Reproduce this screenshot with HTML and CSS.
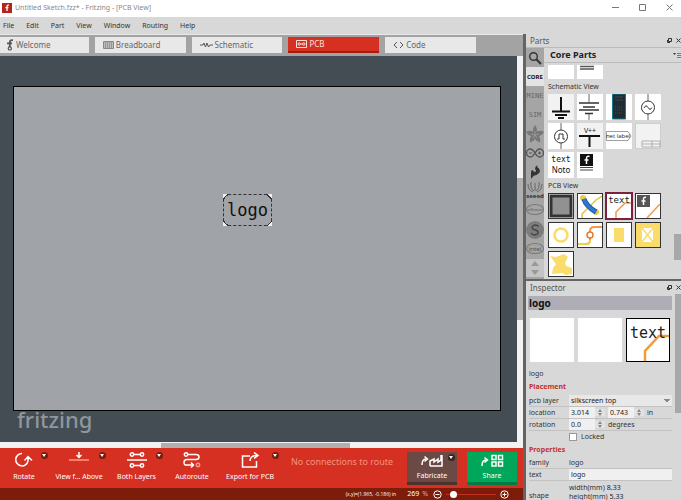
FILE: index.html
```html
<!DOCTYPE html>
<html lang="en">
<head>
    <meta charset="UTF-8">
    <meta name="viewport" content="width=device-width, initial-scale=1.0">
    <title>Untitled Sketch.fzz* - Fritzing - [PCB View]</title>
    <link rel="stylesheet" href="styles.css">
</head>
<body>

    <header class="titlebar">
        <svg class="app-icon" viewBox="0 0 10 10"><rect width="10" height="10" fill="#b5241c"/><path d="M7 2.2H6q-1 0-1 1V8M3.4 4.6h3" stroke="#fff" stroke-width="1.3" fill="none"/></svg>
        <span class="title">Untitled Sketch.fzz* - Fritzing - [PCB View]</span>
        <div class="window-buttons">
            <button aria-label="Minimize"><svg viewBox="0 0 7 7"><path d="M0 3.5h7"/></svg></button>
            <button aria-label="Maximize"><svg viewBox="0 0 7 7"><path d="M.5.5h6v6h-6z"/></svg></button>
            <button aria-label="Close"><svg viewBox="0 0 7 7"><path d="M.5.5l6 6M6.5.5l-6 6"/></svg></button>
        </div>
    </header>

    <nav class="menubar">
        <a href="#">File</a>
        <a href="#">Edit</a>
        <a href="#">Part</a>
        <a href="#">View</a>
        <a href="#">Window</a>
        <a href="#">Routing</a>
        <a href="#">Help</a>
    </nav>

    <main class="main">

        <section class="editor">
            <div class="tabs">
                <button class="tab tab-first"><svg width="8" height="12" viewBox="0 0 8 12"><path d="M7 1.2Q3.8.6 3.8 3.6V8M1 4.4h5" stroke-width="1.8"/><circle cx="3.8" cy="9.4" r="1.6" stroke-width="1.2"/></svg>Welcome</button>
                <button class="tab"><svg width="11" height="8" viewBox="0 0 11 8"><path d="M.5.5h10v7H.5z" fill="#bbb" stroke="#888"/><path d="M2 2h8M2 4h8M2 6h8" stroke="#777" stroke-dasharray="1 1"/></svg>Breadboard</button>
                <button class="tab"><svg width="13" height="8" viewBox="0 0 13 8"><path d="M0 4h3l1-2 1.5 4L7 2l1.5 4L10 4h3"/></svg>Schematic</button>
                <button class="tab tab-active"><svg width="11" height="8" viewBox="0 0 11 8"><path d="M.5.5h10v7H.5zM4.5 4h2"/><circle cx="3.2" cy="4" r="1.2"/><circle cx="7.8" cy="4" r="1.2"/></svg>PCB</button>
                <button class="tab"><svg width="11" height="8" viewBox="0 0 11 8"><path d="M4 1L1 4l3 3M7 1l3 3-3 3"/></svg>Code</button>
            </div>

            <div class="canvas-row">
                <div class="workspace">
                    <div class="board">
                        <div class="silk-text">
                            <span>logo</span>
                            <i class="corner top left"></i>
                            <i class="corner top right"></i>
                            <i class="corner bottom left"></i>
                            <i class="corner bottom right"></i>
                        </div>
                    </div>
                    <div class="watermark">fritzing</div>
                </div>
                <div class="scroll-v"><div class="thumb"></div></div>
            </div>
            <div class="scroll-h"><div class="thumb"></div></div>

            <div class="toolbar">
                <button class="tool tool-rotate">
                    <svg width="20" height="16" viewBox="0 0 20 16"><path d="M8 1.5A6.2 6.2 0 1 0 14 9V5M10.5 8.5L14 4.5l4 4"/></svg>
                    Rotate
                    <i class="drop"></i>
                </button>
                <button class="tool tool-view">
                    <svg width="20" height="16" viewBox="0 0 20 16"><path d="M10 0v5M7.5 3L10 5.5 12.5 3"/><path d="M0 8h20" stroke="#ff9a80"/></svg>
                    View f... Above
                    <i class="drop"></i>
                </button>
                <button class="tool tool-layers">
                    <svg width="20" height="16" viewBox="0 0 20 16"><path d="M0 8h20M7 2.5h6M7 13.5h6"/><circle cx="5" cy="2.5" r="1.7"/><circle cx="15" cy="2.5" r="1.7"/><circle cx="5" cy="13.5" r="1.7"/><circle cx="15" cy="13.5" r="1.7"/></svg>
                    Both Layers
                    <i class="drop"></i>
                </button>
                <button class="tool tool-autoroute">
                    <svg width="20" height="16" viewBox="0 0 20 16"><circle cx="4" cy="2.5" r="1.7"/><path d="M6 2.5h8q3 0 3 2.500t-3 2.500H5q-3 0-3 3t3 2.500h6M9 10.500l2.500 2.500L9 15.500"/><circle cx="16" cy="13" r="1.7" stroke="#ff9a80"/></svg>
                    Autoroute
                </button>
                <button class="tool tool-export">
                    <svg width="20" height="16" viewBox="0 0 20 16"><path d="M10 4H2.5v11h14V9M10 9q0-5.500 7-5.500M14 .5l4 3-4 3"/></svg>
                    Export for PCB
                    <i class="drop"></i>
                </button>
                <span class="route-status">No connections to route</span>
                <button class="big-btn fabricate">
                    <svg width="24" height="14" viewBox="0 0 24 14"><path d="M2 11Q2 5 6 5M4.5 2.5L7.5 5l-3 2.500M10 12V7l4-2v3l4-3v3l3-2V1M22 1v11H10"/></svg>
                    Fabricate
                    <i class="drop"></i>
                </button>
                <button class="big-btn share">
                    <svg width="24" height="14" viewBox="0 0 24 14"><path d="M2 12Q2 6 6 6M4.5 3.5L7.5 6l-3 2.500M12 1.500h4v4h-4zM18.5 1.500h4v4h-4zM12 8h4v4h-4zM18.5 8h4v4h-4z"/></svg>
                    Share
                </button>
            </div>

            <footer class="statusbar">
                <span class="coords">(x,y)=(1.965, -0.186) in</span>
                <span class="zoom-value">269</span>
                <span class="percent">%</span>
                <button aria-label="Zoom out"><svg width="9" height="9" viewBox="0 0 9 9"><circle cx="4.5" cy="4.5" r="3.7"/><path d="M2.5 4.5h4"/></svg></button>
                <input type="range" class="zoom-slider" min="0" max="100" value="10" aria-label="Zoom">
                <button aria-label="Zoom in"><svg width="9" height="9" viewBox="0 0 9 9"><circle cx="4.5" cy="4.5" r="3.7"/><path d="M2.5 4.5h4M4.5 2.5v4"/></svg></button>
            </footer>
        </section>

        <aside class="docks">
            <section class="dock parts">
                <div class="dock-head">
                    <h2>Parts</h2>
                    <button aria-label="Float"><svg width="5" height="5" viewBox="0 0 5 5"><path d="M1.5.5h3v3h-3zM.5 2v2.500H3"/></svg></button>
                    <button aria-label="Close"><svg width="5" height="5" viewBox="0 0 5 5"><path d="M.5.5l4 4M4.5.5l-4 4"/></svg></button>
                </div>
                <div class="parts-body">
                    <div class="bins">
                        <button class="bin" aria-label="Search"><svg width="14" height="14" viewBox="0 0 14 14"><circle cx="5.5" cy="5.5" r="3.8" stroke-width="1.4"/><path d="M8.3 8.3L13 13" stroke-width="2"/></svg></button>
                        <button class="bin bin-active">CORE</button>
                        <button class="bin bin-mono">MINE</button>
                        <button class="bin bin-mono">SIM</button>
                        <button class="bin" aria-label="Adafruit"><svg width="18" height="18" viewBox="0 0 18 18"><path d="M9 0Q11.5 3 11 6.500 15 5 18 7q-2 3.500-5 4 2 3 1 6.500-3.500-1-5-3.500-1.500 2.500-5 3.500-1-3.500 1-6.500-3-.5-5-4Q3 5 7 6.500 6.500 3 9 0z" fill="#777" stroke="none"/><path d="M9 10V6M9 10l3.500-1M9 10l2 3M9 10l-2 3M9 10L5.500 9" stroke="#a5a5a5" stroke-width=".7"/></svg></button>
                        <button class="bin" aria-label="Arduino"><svg width="18" height="10" viewBox="0 0 18 10"><g stroke="#555"><path d="M9 5Q6.500 1 4.500 1a4 4 0 0 0 0 8Q6.500 9 9 5t4.500-4a4 4 0 0 1 0 8Q11.500 9 9 5z" stroke-width="1.4"/><path d="M3 5h3M12 5h3M13.500 3.500v3"/></g></svg></button>
                        <button class="bin" aria-label="Sparkfun"><svg width="12" height="14" viewBox="0 0 12 14"><path d="M2 14V7q0-2 2-2 0 2 2 2 2-1 0-3Q6 1 8.500 0 7.500 2 10 3.500q2 3-.5 5Q7 11 5 10.500z" fill="#333" stroke="none"/></svg></button>
                        <button class="bin bin-seeed"><svg width="16" height="11" viewBox="0 0 16 11"><path d="M1 2q0 6 5 8M15 2q0 6-5 8M4 0q-1 6 3 9M12 0q1 6-3 9M8 1v8" stroke="#666"/></svg>seeed</button>
                        <button class="bin bin-infineon">infineon</button>
                        <button class="bin" aria-label="Snootlab"><svg width="18" height="18" viewBox="0 0 20 20"><circle cx="10" cy="10" r="10" fill="#7c7c7c" stroke="none"/><path d="M14 6Q12 4 9.500 4.500 6 5.500 7 8q.5 1.500 3.500 2t3 3q-.5 2.500-3.500 2.500T5.500 13.500" stroke="#444" stroke-width="1.5"/></svg></button>
                        <button class="bin bin-intel">intel</button>
                        <button class="bin bin-arrow" aria-label="Up"><svg width="8" height="5" viewBox="0 0 8 5"><path d="M0 5l4-5 4 5z"/></svg></button>
                        <button class="bin bin-arrow" aria-label="Down"><svg width="8" height="5" viewBox="0 0 8 5"><path d="M0 0l4 5 4-5z"/></svg></button>
                    </div>
                    <div class="bin-view">
                        <div class="bin-title">
                            <h3>Core Parts</h3>
                            <button aria-label="Bin menu"><svg width="8" height="6" viewBox="0 0 8 6"><path d="M0 1h3L1.500 3z" fill="#333" stroke="none"/><path d="M4 1.500h4M4 3.500h4M4 5.500h4" stroke="#777"/></svg></button>
                        </div>
                        <div class="parts-scroll">
                            <div class="cells cells-cut">
                                <div class="cell"></div>
                                <div class="cell"><svg viewBox="0 0 26 14"><path d="M3 1.500h14M3 4h14" stroke="#555" stroke-width="1.5"/></svg></div>
                            </div>
                            <h4>Schematic View</h4>
                            <div class="cells">
                                <div class="cell grey"><svg viewBox="0 0 26 26"><path d="M13 3v14" stroke="#111" stroke-width="2"/><path d="M4 17.500h18M7 21h12M10 24h6" stroke="#111" stroke-width="2"/></svg></div>
                                <div class="cell"><svg viewBox="0 0 26 26"><path d="M12 0v8M12 19v7" stroke="#666"/><path d="M2 9h20M6 13h12M2 16h20M8 19.500h8" stroke-width="1.5"/></svg></div>
                                <div class="cell"><svg viewBox="0 0 26 26"><path d="M6.500 0h13v25h-13z" fill="#1f2d33" stroke="#137a8c"/><path d="M9 3h8M9 6h8" stroke="#445"/><path d="M9 13h8M9 16h8M9 19h8" stroke="#5a4747" stroke-dasharray="1 1"/></svg></div>
                                <div class="cell"><svg viewBox="0 0 26 26"><path d="M13 0v7M13 20v6" stroke="#666"/><circle cx="13" cy="13.5" r="6.5"/><path d="M9 14q2-4 4-.5t4 0"/></svg></div>
                                <div class="cell"><svg viewBox="0 0 26 26"><path d="M13 0v7M13 20v6" stroke="#666"/><circle cx="13" cy="13.5" r="6.5"/><path d="M9 16h2v-5h4v5h2"/></svg></div>
                                <div class="cell grey"><svg viewBox="0 0 26 26"><text x="13" y="10" font-size="7" text-anchor="middle">V++</text><path d="M2 13h21M12.500 13v11" stroke="#111" stroke-width="2"/></svg></div>
                                <div class="cell"><svg viewBox="0 0 26 26"><path d="M.5 8.500H22l3 4.500-3 4.500H.5z" stroke="#777" stroke-width=".7"/><text class="net" x="12" y="15" font-size="6" text-anchor="middle">net label</text></svg></div>
                                <div class="cell grey"><svg viewBox="0 0 26 26"><path d="M.5.5h25v25H.5z" stroke="#ccc"/><path d="M7 18h18v6H7zM7 21h18M17 18v6" stroke="#999" stroke-width=".7"/></svg></div>
                                <div class="cell note"><b>text</b>Noto</div>
                                <div class="cell"><svg viewBox="0 0 26 26"><path d="M3 2h13v12H3z" fill="#111" stroke="none"/><path d="M12.500 4.500Q9.500 3.500 9.500 6.500V12M7.500 8h4" stroke="#fff" stroke-width="1.5"/><path d="M3 15.500h13M3 18h13" stroke="#444"/></svg></div>
                            </div>
                            <h4>PCB View</h4>
                            <div class="cells pcb">
                                <div class="cell"><svg viewBox="0 0 24 24"><path d="M2 2h20v20H2z" fill="#919191" stroke="#333" stroke-width="3"/></svg></div>
                                <div class="cell"><svg viewBox="0 0 24 24"><path d="M4 24v-4L18 6l6-4" stroke="#e8c23c" stroke-width="1.5"/><circle cx="5" cy="4" r="3" fill="#ecc94b" stroke="none"/><circle cx="18" cy="18" r="3" fill="#ecc94b" stroke="none"/><path d="M6 5q2 7 12 13" stroke="#174ea6" stroke-width="5"/><path d="M6 5q2 7 12 13" stroke="#2f78cf" stroke-width="3.5"/></svg></div>
                                <div class="cell selected"><svg viewBox="0 0 24 24"><path d="M9 24v-6l9-9h6" stroke="#ef9a52" stroke-width="1.5"/><text class="mono" x="12" y="9" font-size="9" text-anchor="middle">text</text></svg></div>
                                <div class="cell"><svg viewBox="0 0 24 24"><path d="M11 24l13-14" stroke="#ef9a52" stroke-width="1.5"/><path d="M1 1h13v12H1z" fill="#555" stroke="none"/><path d="M10 3.500Q7.500 2.500 7.500 5.500V11M5.500 7h4" stroke="#fff" stroke-width="1.5"/></svg></div>
                                <div class="cell"><svg viewBox="0 0 24 24"><circle cx="12" cy="12" r="6.5" stroke="#f9dc6a" stroke-width="2.5"/></svg></div>
                                <div class="cell"><svg viewBox="0 0 24 24"><path d="M0 21h8q4 0 4-4V8q0-4 4-4h8" stroke="#ef9a52" stroke-width="2"/><path d="M0 21h8q4 0 4-4" stroke="#f0cf50" stroke-width="2"/><circle cx="12" cy="12" r="3" fill="#fff" stroke="#e27b30" stroke-width="1.5"/></svg></div>
                                <div class="cell"><svg viewBox="0 0 24 24"><path d="M7 5h10v14H7z" fill="#f9dc6a" stroke="none"/></svg></div>
                                <div class="cell yellow"><svg viewBox="0 0 24 24"><path d="M6 5h11v14H6z" fill="#fff" stroke="none"/><path d="M6 5l11 14M17 5L6 19" stroke="#f9dc6a" stroke-width="1.5"/></svg></div>
                                <div class="cell"><svg viewBox="0 0 24 24"><path d="M1 4l6 1 8-3 4 3-3 6 1 3 6 2v6l-6 1-4-2-10 1 1-6 3-4z" fill="#f9dc6a" stroke="none"/></svg></div>
                            </div>
                            <div class="parts-bar"></div>
                        </div>
                    </div>
                </div>
            </section>

            <section class="dock inspector">
                <div class="dock-head">
                    <h2>Inspector</h2>
                    <button aria-label="Float"><svg width="5" height="5" viewBox="0 0 5 5"><path d="M1.5.5h3v3h-3zM.5 2v2.500H3"/></svg></button>
                    <button aria-label="Close"><svg width="5" height="5" viewBox="0 0 5 5"><path d="M.5.5l4 4M4.5.5l-4 4"/></svg></button>
                </div>
                <div class="inspector-row">
                    <form class="inspector-body">
                        <h3 class="part-title">logo</h3>
                        <div class="previews">
                            <div class="preview"></div>
                            <div class="preview"></div>
                            <div class="preview preview-pcb"><svg viewBox="0 0 42 42"><path d="M18 42V32l14-15h10" stroke="#f19a3e" stroke-width="2.5"/><text class="mono" x="21" y="19" font-size="15" text-anchor="middle">text</text></svg></div>
                        </div>
                        <p class="part-name">logo</p>
                        <h4 class="placement">Placement</h4>
                        <div class="field">
                            <label for="layer">pcb layer</label>
                            <select id="layer"><option>silkscreen top</option></select>
                        </div>
                        <div class="field">
                            <label for="locx">location</label>
                            <input type="text" class="num" id="locx" value="3.014"><i class="spin"></i>
                            <input type="text" class="num num-second" value="0.743" aria-label="location y"><i class="spin"></i>
                            <span>in</span>
                        </div>
                        <div class="field">
                            <label for="rot">rotation</label>
                            <input type="text" class="num" id="rot" value="0.0"><i class="spin"></i>
                            <span>degrees</span>
                        </div>
                        <div class="field field-check">
                            <input type="checkbox" id="locked"><label for="locked">Locked</label>
                        </div>
                        <h4>Properties</h4>
                        <div class="field">
                            <span class="name">family</span>
                            <span>logo</span>
                        </div>
                        <div class="field">
                            <label for="text">text</label>
                            <input type="text" class="wide" id="text" value="logo">
                        </div>
                        <div class="field field-shape">
                            <span class="name">shape</span>
                            <div class="sizes">
                                <div class="size"><label for="width">width(mm)</label><input type="text" id="width" value="8.33"></div>
                                <div class="size"><label for="height">height(mm)</label><input type="text" id="height" value="5.33"></div>
                            </div>
                        </div>
                    </form>
                    <div class="inspector-bar"></div>
                </div>
            </section>
        </aside>
    </main>

</body>
</html>
```
FILE: styles.css
```css
* {
    box-sizing: border-box;
}

body {
    margin: 0;
    height: 100vh;
    display: flex;
    flex-direction: column;
    overflow: hidden;
    font-family: "Noto Sans", "Open Sans", sans-serif;
    font-size: 7px;
    line-height: 10px;
    color: #333;
    background-color: #d8d8d8;
}

button {
    display: flex;
    align-items: center;
    justify-content: center;
    padding: 0;
    border: none;
    background: none;
    font: inherit;
    color: inherit;
}

input, select {
    font: inherit;
    color: #222;
    border: none;
    border-radius: 0;
    margin: 0;
    padding: 0;
    min-width: 0;
}

h2, h3, h4, p {
    margin: 0;
    font-size: inherit;
}

svg {
    display: block;
    flex: none;
    fill: none;
    stroke: #333;
}

svg text {
    fill: #222;
    stroke: none;
}

.mono {
    font-family: "DejaVu Sans Mono", monospace;
}

.net {
    font-family: "Open Sans", sans-serif;
}

/* Title and menu */
.titlebar {
    flex: none;
    height: 17px;
    display: flex;
    align-items: center;
    padding: 0 8px 2px 2px;
    background-color: #fff;
}

.app-icon {
    width: 10px;
    height: 10px;
    stroke: none;
}

.title {
    margin-left: 3px;
    color: #888;
}

.window-buttons {
    margin-left: auto;
    display: flex;
    gap: 20px;
}

.window-buttons svg {
    width: 7px;
    height: 7px;
    stroke: #777;
    stroke-width: 1;
}

.menubar {
    flex: none;
    height: 17px;
    display: flex;
    align-items: center;
    gap: 12px;
    padding-left: 3px;
}

.menubar a {
    color: #333;
    text-decoration: none;
}

.main {
    flex: 1;
    min-height: 0;
    display: grid;
    grid-template-columns: minmax(0, 1fr) 158px;
}

/* Editor */
.editor {
    display: flex;
    flex-direction: column;
    min-height: 0;
}

.tabs {
    flex: none;
    height: 22px;
    display: flex;
    gap: 6px;
    padding: 2px 47px 3px 0;
    background-color: #a3a3a3;
    border-top: 1px solid #e8e8e8;
}

.tab {
    flex: 1 1 0;
    justify-content: flex-start;
    gap: 2px;
    padding-left: 8px;
    font-size: 8px;
    color: #666;
    background-color: #e8e8e8;
}

.tab-first {
    padding-left: 6px;
}

.tab svg {
    stroke: #555;
}

.tab-active {
    background-color: #d63022;
    border-bottom: 2px solid #a81c10;
    color: #fbe0dc;
}

.tab-active svg {
    stroke: #fbe0dc;
}

.canvas-row {
    flex: 1;
    min-height: 0;
    display: flex;
}

.workspace {
    flex: 1;
    display: flex;
    position: relative;
    padding: 30px 16px 31px 13px;
    background-color: #444c54;
}

.board {
    flex: 1;
    position: relative;
    border: 1px solid #000;
    background-color: #a0a3a8;
}

.silk-text {
    position: absolute;
    left: 43%;
    top: 33%;
    width: 49px;
    height: 32px;
    display: flex;
    align-items: center;
    justify-content: center;
    border: 1px dashed #333;
    font-family: "DejaVu Sans Mono", monospace;
    font-size: 17px;
    line-height: 24px;
    color: #111;
}

.corner {
    position: absolute;
    width: 6px;
    height: 6px;
}

.top { top: -1px; }
.bottom { bottom: -1px; }
.left { left: -1px; }
.right { right: -1px; }

.top.left { background: linear-gradient(135deg, #eee 35%, #333 35%, #333 50%, transparent 50%); }
.top.right { background: linear-gradient(225deg, #eee 35%, #333 35%, #333 50%, transparent 50%); }
.bottom.left { background: linear-gradient(45deg, #eee 35%, #333 35%, #333 50%, transparent 50%); }
.bottom.right { background: linear-gradient(315deg, #eee 35%, #333 35%, #333 50%, transparent 50%); }

.watermark {
    position: absolute;
    left: 17px;
    bottom: 8px;
    font-size: 22px;
    line-height: 30px;
    font-weight: 500;
    color: #8f969d;
}

.scroll-v {
    width: 6px;
    padding: 122px 0;
    display: flex;
    background-color: #f2f2f2;
}

.scroll-h {
    flex: none;
    height: 6px;
    padding: 1px 173px 0 161px;
    display: flex;
    background-color: #f2f2f2;
}

.thumb {
    flex: 1;
    background-color: #b0b0b0;
}

/* Bottom toolbar */
.toolbar {
    flex: none;
    height: 40px;
    display: flex;
    padding: 4px 6px 2px 0;
    background-color: #d63022;
    color: #fff;
}

.toolbar svg {
    stroke: #fff;
    stroke-width: 1.5;
}

.tool {
    position: relative;
    flex-direction: column;
    justify-content: flex-start;
    gap: 4px;
}

.tool-rotate { width: 48px; }
.tool-view { width: 62px; }
.tool-layers { width: 53px; }
.tool-autoroute { width: 58px; }
.tool-export { width: 58px; }

.drop {
    position: absolute;
    right: 0;
    top: 0;
    width: 7px;
    height: 7px;
    border-radius: 50%;
    background-color: #7a1c0c;
}

.drop::after {
    content: "";
    position: absolute;
    left: 1px;
    top: 2px;
    border: 2px solid transparent;
    border-top: 3px solid #fff;
}

.tool-view .drop {
    right: 4px;
}

.route-status {
    flex: 1;
    padding: 5px 0 0 12px;
    font-size: 9px;
    white-space: nowrap;
    color: #f4917f;
}

.big-btn {
    position: relative;
    flex-direction: column;
    gap: 3px;
    width: 50px;
    height: 33px;
    margin-left: 10px;
}

.fabricate {
    background-color: #6b4a45;
    border-bottom: 3px solid #4e302c;
}

.fabricate .drop {
    right: 2px;
    top: 2px;
    background-color: #3a2420;
}

.share {
    background-color: #00a65a;
    border-bottom: 3px solid #007d42;
}

.statusbar {
    flex: none;
    height: 12px;
    display: flex;
    align-items: center;
    justify-content: flex-end;
    padding-right: 14px;
    background-color: #7d1c0a;
    color: #fff;
}

.statusbar svg {
    stroke: #fff;
}

.coords {
    font-family: "Open Sans", sans-serif;
    font-size: 5px;
    margin-right: 11px;
}

.percent {
    margin: 0 5px 0 3px;
    color: #d8a89e;
}

.zoom-slider {
    appearance: none;
    width: 50px;
    height: 8px;
    margin: 0 4px;
    background: linear-gradient(#c03020, #c03020) center / 100% 1px no-repeat;
}

.zoom-slider::-webkit-slider-thumb {
    appearance: none;
    width: 7px;
    height: 7px;
    border-radius: 50%;
    background-color: #fff;
}

/* Docks */
.docks {
    display: flex;
    flex-direction: column;
    min-height: 0;
    border-left: 3px solid #646464;
}

.dock-head {
    flex: none;
    height: 13px;
    display: flex;
    align-items: center;
    gap: 4px;
    padding-left: 4px;
    color: #555;
}

.dock-head h2 {
    flex: 1;
    font-size: 8px;
    font-weight: 400;
}

.parts {
    flex: none;
    height: 245px;
    display: flex;
    flex-direction: column;
    overflow: hidden;
}

.parts-body {
    flex: 1;
    min-height: 0;
    display: flex;
    border-top: 1px solid #bbb;
}

.bins {
    width: 18px;
    display: flex;
    flex-direction: column;
    background-color: #a5a5a5;
}

.bin {
    flex: none;
    height: 19px;
    width: 18px;
    overflow: hidden;
}

.bin-active {
    background-color: #e3e3e3;
    font-size: 6px;
    font-weight: 700;
    color: #111;
}

.bin-mono {
    font-family: "DejaVu Sans Mono", monospace;
    color: #666;
}

.bin-seeed {
    flex-direction: column;
    font-size: 6px;
    line-height: 6px;
    font-weight: 700;
}

.bin-infineon, .bin-intel {
    height: 11px;
    margin: 4px 0 5px;
    border: 1px solid #777;
    border-radius: 50%;
    font-size: 4px;
    color: #555;
}

.bin-intel {
    font-size: 6px;
}

.bin-arrow {
    height: 9px;
    background-color: #c4c4c4;
}

.bin-arrow svg {
    fill: #999;
    stroke: none;
}

.bin-view {
    flex: 1;
    min-width: 0;
}

.bin-title {
    height: 15px;
    display: flex;
    align-items: center;
    justify-content: space-between;
    padding-left: 6px;
    border-bottom: 1px solid #bbb;
}

.bin-title h3 {
    font-size: 9px;
    color: #222;
}

.parts-scroll {
    position: relative;
    padding: 2px 0 0 4px;
}

.parts-scroll h4 {
    font-weight: 400;
    line-height: 15px;
}

.cells {
    display: grid;
    grid-template-columns: repeat(4, 26px);
    grid-auto-rows: 26px;
    gap: 3px;
}

.cells-cut {
    grid-auto-rows: 14px;
}

.cell {
    background-color: #fff;
}

.grey {
    background-color: #f2f2f2;
}

.note {
    font-size: 8px;
    text-align: center;
    color: #111;
}

.note b {
    display: block;
    padding-top: 3px;
    font-family: "DejaVu Sans Mono", monospace;
    font-weight: 400;
}

.pcb .cell {
    border: 1px solid #333;
}

.pcb .selected {
    border-color: #7d2040;
    outline: 1px solid #7d2040;
}

.pcb .yellow {
    background-color: #f9dc6a;
}

.parts-bar {
    position: absolute;
    right: 0;
    bottom: 17px;
    width: 7px;
    height: 26px;
    background-color: #a8a8a8;
}

.inspector {
    flex: 1;
    min-height: 0;
    display: flex;
    flex-direction: column;
    border-top: 2px solid #646464;
}

.inspector-row {
    flex: 1;
    min-height: 0;
    display: flex;
}

.inspector-body {
    flex: 1;
    min-width: 0;
    padding: 2px 3px 0 2px;
}

.inspector-bar {
    width: 6px;
    height: 119px;
    background-color: #a8a8a8;
}

.part-title {
    height: 14px;
    line-height: 14px;
    padding-left: 1px;
    font-size: 10px;
    color: #111;
    background-color: #afadb5;
}

.previews {
    display: grid;
    grid-template-columns: repeat(3, 44px);
    gap: 4px;
    padding: 8px 2px 7px;
}

.preview {
    height: 44px;
    background-color: #fff;
}

.preview-pcb {
    border: 1px solid #000;
}

.part-name {
    padding-left: 1px;
}

.inspector-body h4 {
    line-height: 14px;
    padding-left: 1px;
    color: #c4302b;
}

.inspector-body .placement {
    line-height: 16px;
}

.field {
    height: 12px;
    display: flex;
    align-items: center;
    margin-left: 1px;
    border-bottom: 1px solid #c2c2c2;
}

.field > label, .name {
    width: 40px;
}

.field select {
    flex: 1;
    height: 11px;
    appearance: none;
    padding-left: 2px;
    background-color: #e8e8e8;
    background-image: linear-gradient(to top right, transparent 50%, #888 50%), linear-gradient(to top left, transparent 50%, #888 50%);
    background-position: right 5px center, right 2px center;
    background-size: 3px 4px;
    background-repeat: no-repeat;
}

.num {
    width: 26px;
    height: 11px;
    padding-left: 2px;
    background-color: #f0f0f0;
}

.num-second {
    margin-left: 3px;
}

.spin {
    width: 10px;
    display: flex;
    flex-direction: column;
    align-items: center;
    gap: 1px;
    background-color: #e2e2e2;
}

.spin::before, .spin::after {
    content: "";
    border: 2px solid transparent;
}

.spin::before {
    border-top: 0;
    border-bottom: 3px solid #888;
}

.spin::after {
    border-bottom: 0;
    border-top: 3px solid #888;
}

.spin + span {
    margin-left: 3px;
}

.field-check {
    padding-left: 40px;
    border-bottom: none;
}

.field-check > label {
    width: auto;
}

.field-check input {
    appearance: none;
    width: 8px;
    height: 8px;
    margin-right: 4px;
    border: 1px solid #999;
    background-color: #fff;
}

.wide {
    flex: 1;
    height: 11px;
    padding-left: 2px;
    background-color: #f0f0f0;
}

.field-shape {
    height: 30px;
    border-bottom: none;
}

.sizes {
    align-self: flex-start;
    padding-top: 2px;
}

.size {
    display: flex;
    height: 9px;
    align-items: center;
}

.sizes input {
    width: 30px;
    margin-left: 2px;
    background: none;
}
```
